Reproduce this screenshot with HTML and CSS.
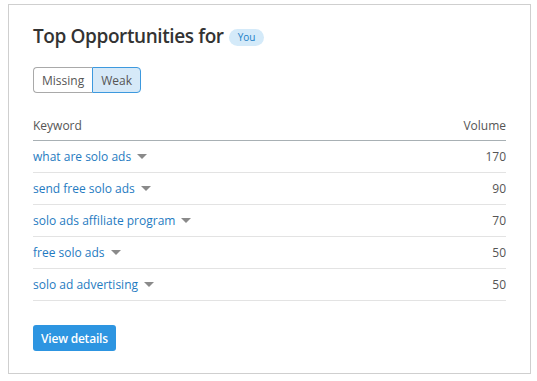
FILE: index.html
```html
<!DOCTYPE html>
<html>
<head>
<meta charset="utf-8">
<link rel="stylesheet" href="styles.css">
</head>
<body>
<div class="card">
  <h1 class="title">Top Opportunities for <span class="badge">You</span></h1>
  <div class="toggle">
    <button class="seg">Missing</button>
    <button class="seg active">Weak</button>
  </div>
  <div class="table">
    <div class="row head"><span>Keyword</span><span>Volume</span></div>
    <div class="row"><span class="kw">what are solo ads<i class="caret"></i></span><span class="vol">170</span></div>
    <div class="row"><span class="kw">send free solo ads<i class="caret"></i></span><span class="vol">90</span></div>
    <div class="row"><span class="kw">solo ads affiliate program<i class="caret"></i></span><span class="vol">70</span></div>
    <div class="row"><span class="kw">free solo ads<i class="caret"></i></span><span class="vol">50</span></div>
    <div class="row"><span class="kw">solo ad advertising<i class="caret"></i></span><span class="vol">50</span></div>
  </div>
  <button class="details">View details</button>
</div>
</body>
</html>
```

FILE: styles.css
```css
* { box-sizing: border-box; }
body {
  margin: 0;
  background: #fff;
  font-family: "Open Sans", "Noto Sans", sans-serif;
  color: #333;
}
.card {
  margin: 4px 0 0 8px;
  width: 523px;
  height: 370px;
  border: 1px solid #cfcfcf;
  padding: 18px 24px 0 24px;
}
.title {
  margin: 0;
  font-size: 19px;
  line-height: 26px;
  font-weight: 600;
  letter-spacing: -0.4px;
  color: #333;
  display: flex;
  align-items: center;
  gap: 5px;
}
.badge {
  display: inline-block;
  background: #d4eaf9;
  color: #1b7ec6;
  font-size: 10px;
  line-height: 17px;
  letter-spacing: 0;
  padding: 0 9px;
  border-radius: 9px;
  font-weight: 400;
  margin-top: 2px;
}
.toggle {
  display: flex;
  margin-top: 18px;
}
.seg {
  font-family: inherit;
  font-size: 12px;
  height: 26px;
  padding: 0 8px;
  background: #fff;
  color: #555;
  border: 1px solid #a9a9a9;
  margin: 0;
}
.seg:first-child {
  border-radius: 4px 0 0 4px;
  border-right: none;
}
.seg.active {
  background: #d6e9f8;
  border-color: #3d99de;
  border-radius: 0 4px 4px 0;
  color: #555;
}
.table {
  margin-top: 17px;
}
.row {
  display: flex;
  justify-content: space-between;
  align-items: center;
  height: 32px;
  border-bottom: 1px solid #e3e3e3;
  font-size: 12px;
}
.row.head {
  height: 31px;
  border-bottom: 1px solid #a8b0b4;
  color: #555;
}
.kw {
  color: #1f7bc1;
  display: flex;
  align-items: center;
}
.vol { color: #555; }
.caret {
  display: inline-block;
  width: 0;
  height: 0;
  border-left: 5px solid transparent;
  border-right: 5px solid transparent;
  border-top: 5px solid #8a8a8a;
  margin-left: 6px;
}
.details {
  margin-top: 24px;
  height: 26px;
  padding: 0 8px;
  border: none;
  border-radius: 3px;
  background: #2d95e1;
  color: #fff;
  font-family: inherit;
  font-size: 12px;
  font-weight: 600;
  letter-spacing: -0.2px;
}
```
